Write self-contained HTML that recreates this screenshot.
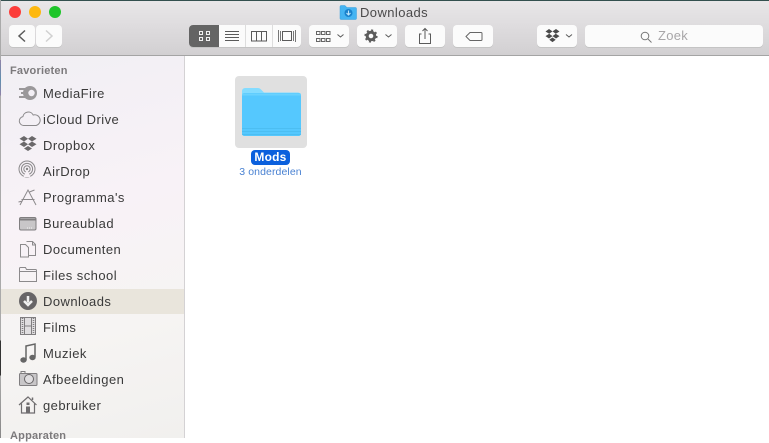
<!DOCTYPE html>
<html><head><meta charset="utf-8"><style>
html,body{margin:0;padding:0;width:769px;height:438px;overflow:hidden;background:#fff;font-family:"Liberation Sans",sans-serif}
.a{position:absolute}
#tb{left:0;top:0;width:769px;height:55px;background:linear-gradient(#e9e7e9,#d2d0d2);border-bottom:1px solid #a4a4a4}
.b{position:absolute;top:25px;height:22px;background:#fbfbfb;border-radius:4px;box-shadow:0 1px 0 #c4c4c4}
#sb{left:1px;top:56px;width:183px;height:382px;background:linear-gradient(165deg,#f1eff4 0%,#f8f2f7 40%,#f6f4f3 70%,#f1f0ee 100%);border-right:1px solid #d4d2d4}
.r{position:absolute;left:43px;font-size:13px;line-height:16px;color:#3a3a3a;white-space:nowrap;letter-spacing:.45px}
.h{position:absolute;left:10px;font-size:11px;font-weight:bold;color:#7c7a7c;line-height:14px;letter-spacing:.2px}
svg{position:absolute;overflow:visible}
</style></head><body>
<div id="tb" class="a"></div>
<div class="a" style="left:0;top:0;width:769px;height:1px;background:#33504f"></div>
<svg style="left:0;top:0" width="769" height="56">
<circle cx="15" cy="12" r="6" fill="#fc3d3a"/><circle cx="35" cy="12" r="6" fill="#fdb80f"/><circle cx="55" cy="12" r="6" fill="#1fc52b"/>
<path d="M340 6.500a1 1 0 0 1 1-1h4l2 2h8.500a1 1 0 0 1 1 1V18.500a1 1 0 0 1-1 1h-14.500a1 1 0 0 1-1-1z" fill="#45b4f2" stroke="#3a9fdd" stroke-width=".5"/>
<circle cx="348.500" cy="13" r="4" fill="#1a82cc"/><path d="M348.500 10.500v4M346.500 13l2 2 2-2" stroke="#bfe6fb" stroke-width="1.100" fill="none"/>
</svg>
<div class="a" style="left:360px;top:5px;font-size:13px;line-height:16px;color:#4a494a;letter-spacing:.42px">Downloads</div>

<div class="b" style="left:9px;width:26px"></div><div class="b" style="left:36px;width:26px"></div>
<div class="b" style="left:189px;width:112px"></div>
<div class="a" style="left:189px;top:25px;width:30px;height:22px;background:#646464;border-radius:4px 0 0 4px"></div>
<div class="a" style="left:245px;top:25px;width:1px;height:22px;background:#ddd"></div>
<div class="a" style="left:272px;top:25px;width:1px;height:22px;background:#ddd"></div>
<div class="b" style="left:309px;width:40px"></div><div class="b" style="left:357px;width:40px"></div>
<div class="b" style="left:405px;width:40px"></div><div class="b" style="left:453px;width:40px"></div>
<div class="b" style="left:537px;width:40px"></div><div class="b" style="left:585px;width:178px"></div>
<svg style="left:0;top:0" width="769" height="56" fill="none" stroke="#5a5a5a" stroke-width="1">
<path d="M25 30.500l-6 5.500 6 5.500" stroke-width="1.500"/><path d="M46 30.500l6 5.500-6 5.500" stroke="#d0d0d0" stroke-width="1.500"/>
<g stroke="#f0f0f0"><rect x="199.500" y="31.500" width="3" height="3"/><rect x="206.500" y="31.500" width="3" height="3"/><rect x="199.500" y="37.500" width="3" height="3"/><rect x="206.500" y="37.500" width="3" height="3"/></g>
<path d="M225 31.500h14M225 34.500h14M225 37.500h14M225 40.500h14"/>
<rect x="251.500" y="31.500" width="15" height="9.500"/><path d="M256.500 31.500v9.500M261.500 31.500v9.500"/>
<rect x="282.500" y="31.500" width="9" height="9"/><path d="M278.500 30v12M280.500 31v10M293.500 31v10M295.500 30v12" stroke="#777"/>
<path d="M316.500 31.500h3.500v3h-3.500zM321.500 31.500h3.500v3h-3.500zM326.500 31.500h3.500v3h-3.500zM316.500 38.500h3.500v3h-3.500zM321.500 38.500h3.500v3h-3.500zM326.500 38.500h3.500v3h-3.500z" stroke="#666"/>
<path d="M337.500 34.500l3 2.500 3-2.500M385.500 34.500l3 2.500 3-2.500M566 34.500l3 2.500 3-2.500"/>
<circle cx="371" cy="36" r="3.800" stroke="#5c5c5c" stroke-width="3"/><circle cx="371" cy="36" r="5.800" stroke="#5c5c5c" stroke-width="1.600" stroke-dasharray="2 2.550"/>
<path d="M421.500 34h-2v9.500h11V34h-2M425 39V29M422.500 31l2.500-2.500 2.500 2.500"/>
<path d="M466 36.500l4-4h11a1 1 0 0 1 1 1v6a1 1 0 0 1-1 1h-11z" stroke="#666"/>
<circle cx="645" cy="36" r="3.800" stroke="#777"/><path d="M648 39l3.500 3.500" stroke="#777"/>
<g fill="#4a4a4a" stroke="none"><path d="M549 29l3.500 2.400-3.300 2.400-3.700-2.300zM556 29l-3.500 2.400 3.300 2.400 3.700-2.300zM549 38.500l3.500-2.400-3.300-2.300-3.700 2.300zM556 38.500l-3.500-2.400 3.300-2.300 3.700 2.300zM552.500 37.500l3.200 2.200-3.200 2.400-3.200-2.400z"/></g>
</svg>
<div class="a" style="left:658px;top:28px;font-size:13px;line-height:16px;color:#a8a6a8;letter-spacing:.3px">Zoek</div>

<div id="sb" class="a"></div>
<div class="a" style="left:1px;top:289px;width:183px;height:25px;background:#e9e5dc"></div>
<div class="a" style="left:0;top:0;width:1px;height:438px;background:linear-gradient(#aaa 0,#aaa 60px,#8f82a8 60px,#5f8fae 80px,#8f82a8 95px,#aaa 96px,#aaa 340px,#333 341px,#333 375px,#aaa 376px,#888 438px)"></div>
<div class="h" style="top:64px">Favorieten</div>
<div class="r" style="top:86px">MediaFire</div>
<div class="r" style="top:112px">iCloud Drive</div>
<div class="r" style="top:138px">Dropbox</div>
<div class="r" style="top:164px">AirDrop</div>
<div class="r" style="top:190px">Programma's</div>
<div class="r" style="top:216px">Bureaublad</div>
<div class="r" style="top:242px">Documenten</div>
<div class="r" style="top:268px">Files school</div>
<div class="r" style="top:294px">Downloads</div>
<div class="r" style="top:320px">Films</div>
<div class="r" style="top:346px">Muziek</div>
<div class="r" style="top:372px">Afbeeldingen</div>
<div class="r" style="top:398px">gebruiker</div>
<div class="h" style="top:429px">Apparaten</div>

<svg style="left:0;top:56px" width="184" height="382" fill="none" stroke="#8c8a8c" stroke-width="1">
<ellipse cx="30" cy="37" rx="7" ry="7" fill="#9a989a" stroke="none"/><path d="M19 33h8M21 37h6M19 41h8" stroke="#9a989a" stroke-width="2"/><circle cx="31.500" cy="37" r="3.200" fill="#f3eff5" stroke="none"/>
<path d="M23.500 69.500a4.500 4.500 0 0 1-.6-8.900 5.500 5.500 0 0 1 10.300-1.600 5 5 0 0 1 3 10.500z"/>
<g fill="#6a686a" stroke="none"><path d="M24 80l4 2.800-4 2.700-4.500-2.700zM32 80l-4 2.800 4 2.700 4.500-2.700zM24 91l4-2.800-4-2.700-4.500 2.700zM32 91l-4-2.800 4-2.700 4.500 2.700zM28 90l4 2.500-4 2.500-4-2.500z"/></g>
<circle cx="27" cy="113" r="8"/><circle cx="27" cy="113" r="5.600"/><circle cx="27" cy="113" r="3.200"/><path d="M27 113l3.500 8h-7z" fill="#f7f1f6" stroke="none"/><circle cx="27" cy="113" r="1.200" fill="#888" stroke="none"/>
<path d="M20 149l8-15 8 15M21.500 143.500h13M29.500 136l5-2M18.500 146l4-1" />
<rect x="19.500" y="161.500" width="16.500" height="12.500" rx="1.500" fill="#c8c6c8" stroke="#807e80"/><path d="M20 163.500h16" stroke="#807e80" stroke-width="2"/><path d="M27 172h6" stroke="#f2f2f2" stroke-dasharray="1 1"/>
<path d="M26.500 185.500h6l3 3v11h-7M32.500 185.500V189h3"/><path d="M20.500 188.500h5l3 3v9.500h-8z" fill="#f7f1f6"/>
<path d="M19.500 214v-1.500a1 1 0 0 1 1-1h5l1 2h9a1 1 0 0 1 1 1v11h-17z"/><path d="M19.500 215.500h17"/>
<circle cx="28" cy="245" r="9" fill="#676567" stroke="none"/><path d="M28 240v6.500M24 245l4 4 4-4" stroke="#f0f0f0" stroke-width="2.500"/>
<rect x="20.500" y="261.500" width="15" height="17" fill="#e0dee0" stroke="#807e80"/><path d="M24.500 261.500v17M31.500 261.500v17M24.500 270h7" stroke="#807e80"/><path d="M22.500 262v16M33.500 262v16" stroke="#807e80" stroke-dasharray="1 1" stroke-width="1.500"/>
<path d="M26 304v-14l9-2v13" stroke="#666" stroke-width="1.500"/><ellipse cx="23.500" cy="304" rx="3.200" ry="2.700" fill="#666" stroke="none"/><ellipse cx="32.500" cy="301.500" rx="3.200" ry="2.700" fill="#666" stroke="none"/>
<rect x="19.500" y="317.500" width="17.500" height="12" rx="1" fill="#c8c6c8" stroke="#807e80"/><circle cx="29" cy="323" r="4.500" fill="#e0dee0" stroke="#6a686a"/><path d="M21 317v-1.500h4v1.500" stroke="#807e80"/>
<path d="M19 349l9-8 8.500 8M21.500 347.500V357h13v-9.500" stroke="#6f6d6f" stroke-width="1.200"/><rect x="26" y="350.500" width="4" height="6.500" fill="#6f6d6f" stroke="none"/><rect x="26.500" y="346.500" width="3" height="2.500" fill="#6f6d6f" stroke="none"/><path d="M32.500 344v-2.500" stroke="#6f6d6f" stroke-width="1.500"/>
</svg>

<div class="a" style="left:235px;top:76px;width:72px;height:72px;background:#e0e0e0;border-radius:4px"></div>
<svg style="left:235px;top:76px" width="72" height="72">
<path d="M7 15a3 3 0 0 1 3-3h13a4 4 0 0 1 3 1.500l3 3h34a3 3 0 0 1 3 3v10H7z" fill="#84dcff"/>
<path d="M7 19.500c0-1.500 1-2.500 2.500-2.500h54c1.500 0 2.500 1 2.500 2.500v38c0 1.500-1 2.500-2.500 2.500h-54C8 60 7 59 7 57.500z" fill="#55c8fe"/>
<path d="M7 17.500h59v2H7z" fill="#6fd4fe" opacity=".8"/>
<path d="M7 52.500h59M7 55.500h59M7 58.500h59" stroke="#4abbef" stroke-width="1" opacity=".75"/>
</svg>
<div class="a" style="left:251px;top:150px;width:39px;height:15px;background:#0b60dd;border-radius:4px;color:#fff;font-size:12px;font-weight:bold;line-height:15px;text-align:center;letter-spacing:.2px">Mods</div>
<div class="a" style="left:220px;top:165px;width:101px;text-align:center;font-size:10.500px;line-height:14px;color:#4a82d2;white-space:nowrap;letter-spacing:.1px">3 onderdelen</div>
</body></html>
